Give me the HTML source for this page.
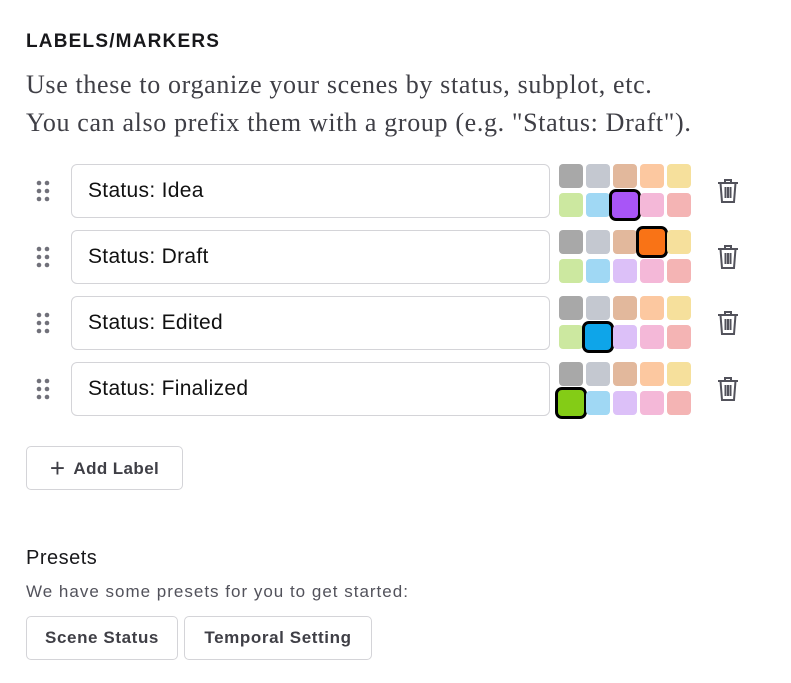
<!DOCTYPE html>
<html><head><style>
*{margin:0;padding:0;box-sizing:border-box}
body{width:791px;height:683px;background:#fff;position:relative;font-family:"Liberation Sans",sans-serif;overflow:hidden}
.a{position:absolute;white-space:nowrap}
h1{position:absolute;left:26px;top:31px;font-size:19px;font-weight:bold;color:#18181b;letter-spacing:1.2px}
.serif{position:absolute;left:26px;font-family:"Liberation Serif",serif;font-size:26px;letter-spacing:.65px;color:#3f3f46;white-space:nowrap}
.inp{position:absolute;left:71px;width:479px;height:54px;border:1px solid #d4d4d8;border-radius:6px;font-size:21px;letter-spacing:.3px;color:#111;padding-left:16px;line-height:52px}
.sw{position:absolute;width:24px;height:24px;border-radius:4px}
.sel{position:absolute;width:32px;height:32px;border:3px solid #000;border-radius:7px}
.dots{position:absolute;left:36px;width:14px;height:22px}
.btn{position:absolute;height:44px;border:1px solid #d4d4d8;border-radius:5px;font-size:17px;letter-spacing:.6px;font-weight:bold;color:#3f3f46;line-height:42px;text-align:center}
</style></head><body>
<h1>LABELS/MARKERS</h1>
<div class="serif" style="top:70px">Use these to organize your scenes by status, subplot, etc.</div>
<div class="serif" style="top:108px">You can also prefix them with a group (e.g. "Status: Draft").</div>
<div id="rows"></div>
<div class="btn" style="left:26px;top:446px;width:157px;letter-spacing:.4px"><span style="font-weight:normal;font-size:26px;vertical-align:-3px;margin-right:8px">+</span>Add Label</div>
<div class="a" style="left:26px;top:547px;font-size:20px;letter-spacing:.5px;color:#18181b">Presets</div>
<div class="a" style="left:26px;top:582px;font-size:17px;letter-spacing:1px;color:#52525b">We have some presets for you to get started:</div>
<div class="btn" style="left:26px;top:616px;width:152px">Scene Status</div>
<div class="btn" style="left:184px;top:616px;width:188px">Temporal Setting</div>
<script>
var names=["Status: Idea","Status: Draft","Status: Edited","Status: Finalized"];
var c1=["#a8a8a8","#c4c8d0","#e2b89c","#fcc8a0","#f6e09c"];
var c2=["#cce8a0","#a0d8f4","#dcc0f8","#f4b8d8","#f4b4b4"];
var sel=[[1,2,"#a855f7"],[0,3,"#f97316"],[1,1,"#0ea5e9"],[1,0,"#84cc16"]];
var h="";
for(var i=0;i<4;i++){
 var t=164+i*66;
 h+='<div class="inp" style="top:'+t+'px">'+names[i]+'</div>';
 h+='<svg class="dots" style="top:'+(t+16)+'px" viewBox="0 0 14 22">';
 for(var r=0;r<3;r++)for(var c=0;c<2;c++)h+='<circle cx="'+(3+c*8)+'" cy="'+(3+r*8)+'" r="2.3" fill="#71717a"/>';
 h+='</svg>';
 for(var r=0;r<2;r++)for(var c=0;c<5;c++){
  var x=559+c*27,y=t+r*29;
  if(sel[i][0]==r&&sel[i][1]==c)h+='<div class="sel" style="left:'+(x-4)+'px;top:'+(y-4)+'px;background:'+sel[i][2]+'"></div>';
  else h+='<div class="sw" style="left:'+x+'px;top:'+y+'px;background:'+(r?c2:c1)[c]+'"></div>';
 }
 h+='<svg class="a" style="left:716px;top:'+(t+13)+'px" width="24" height="28" viewBox="0 0 24 28" fill="none" stroke="#52525b" stroke-width="2"><path d="M2 6h20M9 6V3h6v3M4.5 6l1.5 19h12L19.5 6M9.5 10v11M12 10v11M14.5 10v11"/></svg>';
}
document.getElementById("rows").innerHTML=h;
</script>
</body></html>
